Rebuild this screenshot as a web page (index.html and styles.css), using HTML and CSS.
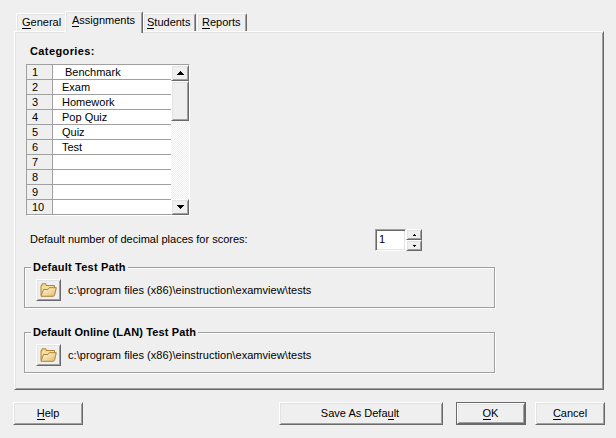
FILE: index.html
```html
<!DOCTYPE html>
<html lang="en">
<head>
<meta charset="utf-8">
<title>Preferences</title>
<link rel="stylesheet" href="styles.css">
</head>
<body>
<svg class="defs" width="0" height="0">
  <defs>
    <linearGradient id="gold" x1="0" y1="0" x2="1" y2="1">
      <stop offset="0" stop-color="#fffbe0"/><stop offset="1" stop-color="#e3bb66"/>
    </linearGradient>
    <symbol id="folder" viewBox="0 0 17 14">
      <path d="M1 12.5V2.5H2V.8H6V2.5H14.5V5" fill="#f3dc9c" stroke="#b08335"/>
      <path d="M1 13.3L3.5 6.5H8L9.3 4.7H16.3L14.6 12L13.5 13.3Z" fill="url(#gold)" stroke="#b08335"/>
    </symbol>
  </defs>
</svg>
<nav class="tabs">
  <div class="tab general"><span><u>G</u>eneral</span></div>
  <div class="tab active"><span><u>A</u>ssignments</span></div>
  <div class="tab students"><span><u>S</u>tudents</span></div>
  <div class="tab reports"><span><u>R</u>eports</span></div>
</nav>
<main class="panel">
  <h2 class="title">Categories:</h2>
  <div class="list">
    <div class="rows">
      <div class="row"><b>1</b><span class="first">Benchmark</span></div>
      <div class="row"><b>2</b><span>Exam</span></div>
      <div class="row"><b>3</b><span>Homework</span></div>
      <div class="row"><b>4</b><span>Pop Quiz</span></div>
      <div class="row"><b>5</b><span>Quiz</span></div>
      <div class="row"><b>6</b><span>Test</span></div>
      <div class="row"><b>7</b><span></span></div>
      <div class="row"><b>8</b><span></span></div>
      <div class="row"><b>9</b><span></span></div>
      <div class="row"><b>10</b><span></span></div>
    </div>
    <div class="scroll">
      <div class="bevel arrow"><svg width="7" height="4" shape-rendering="crispEdges"><path d="M3 0H4V1H5V2H6V3H7V4H0V3H1V2H2V1H3Z"/></svg></div>
      <div class="bevel thumb"></div>
      <div class="track"></div>
      <div class="bevel arrow"><svg width="7" height="4" shape-rendering="crispEdges"><path d="M0 0H7V1H6V2H5V3H4V4H3V3H2V2H1V1H0Z"/></svg></div>
    </div>
  </div>
  <div class="decimals">
    <span class="label">Default number of decimal places for scores:</span>
    <div class="field">1</div>
    <div class="spin">
      <div class="bevel"><svg width="3" height="2" shape-rendering="crispEdges"><path d="M1 0H2V1H3V2H0V1H1Z"/></svg></div>
      <div class="bevel"><svg width="3" height="2" shape-rendering="crispEdges"><path d="M0 0H3V1H2V2H1V1H0Z"/></svg></div>
    </div>
  </div>
  <fieldset class="group">
    <legend><span class="l1">Default Test Path</span></legend>
    <div class="path"><div class="bevel browse"><svg width="17" height="14"><use href="#folder"/></svg></div><span>c:\program files (x86)\einstruction\examview\tests</span></div>
  </fieldset>
  <fieldset class="group">
    <legend><span class="l2">Default Online (LAN) Test Path</span></legend>
    <div class="path"><div class="bevel browse"><svg width="17" height="14"><use href="#folder"/></svg></div><span>c:\program files (x86)\einstruction\examview\tests</span></div>
  </fieldset>
</main>
<footer class="buttons">
  <div class="bevel btn help"><span><u>H</u>elp</span></div>
  <div class="bevel btn save"><span>Save As Defa<u>u</u>lt</span></div>
  <div class="default"><div class="bevel btn"><span><u>O</u>K</span></div></div>
  <div class="bevel btn cancel"><span><u>C</u>ancel</span></div>
</footer>
</body>
</html>
```
FILE: styles.css
```css
* { box-sizing: border-box; }
body {
  margin: 0;
  width: 616px;
  height: 438px;
  overflow: hidden;
  background: #efefef;
  color: #000;
  font: 11px/15px "Liberation Sans", Arial, sans-serif;
}
svg { display: block; }
.defs { position: absolute; }
u { text-decoration: none; border-bottom: 1px solid #000; display: inline-block; line-height: 11px; }
.bevel {
  background: #efefef;
  border: 1px solid;
  border-color: #fff #696969 #696969 #fff;
  box-shadow: inset 1px 1px #e3e3e3, inset -1px -1px #a0a0a0;
  display: flex;
  align-items: center;
  justify-content: center;
}

.tabs { display: flex; align-items: flex-end; height: 31px; padding-left: 16px; }
.tab {
  height: 18px;
  border: 1px solid;
  border-color: #fff #696969 transparent #fff;
  border-bottom: 0;
  border-radius: 2px 2px 0 0;
  box-shadow: inset 1px 1px #e3e3e3, inset -1px 0 #a0a0a0;
  padding: 1px 0 0 5px;
  white-space: nowrap;
}
.general { width: 49px; border-right: 0; box-shadow: inset 1px 1px #e3e3e3; }
.active {
  width: 78px;
  height: 22px;
  margin-bottom: -2px;
  position: relative;
  background: #efefef;
  padding: 1px 0 0 6px;
}
.students { width: 53px; padding-left: 3px; }
.reports { width: 50px; margin-left: 1px; padding-left: 4px; }

.panel {
  margin-left: 14px;
  width: 590px;
  height: 359px;
  border: 1px solid;
  border-color: #fff #696969 #696969 #fff;
  box-shadow: inset 1px 1px #e3e3e3, inset -1px -1px #a0a0a0;
  padding: 12px 0 0 9px;
}
.title { margin: 0 0 5px 6px; font-size: 11px; line-height: 15px; letter-spacing: .4px; }
.list {
  display: flex;
  margin-left: 2px;
  width: 164px;
  height: 152px;
  border: 1px solid;
  border-color: #a0a0a0 #fff #fff #a0a0a0;
}
.rows { width: 144px; background: #fff; }
.row { display: flex; height: 15px; border-bottom: 1px solid #a0a0a0; line-height: 15px; }
.row b { width: 26px; padding-left: 5px; font-weight: 400; background: #efefef; border-right: 1px solid #a0a0a0; }
.row span { padding-left: 9px; }
.row .first { padding-left: 12px; }
.scroll { width: 18px; display: flex; flex-direction: column; }
.arrow { height: 16px; }
.thumb { height: 40px; }
.track { flex: 1; background: repeating-conic-gradient(#efefef 0 25%, #fff 0 50%) 0 0 / 2px 2px; }

.decimals { display: flex; height: 22px; margin: 13px 0 16px 6px; line-height: 20px; }
.label { width: 345px; }
.field {
  width: 31px;
  height: 22px;
  padding-left: 3px;
  line-height: 18px;
  background: #fff;
  border: 1px solid;
  border-color: #a0a0a0 #fff #fff #a0a0a0;
  box-shadow: inset 1px 1px #696969, inset -1px -1px #e3e3e3;
}
.spin { width: 16px; }
.spin .bevel { height: 11px; }

.group {
  display: flex;
  margin: 0 0 24px;
  padding: 11px 0 0 11px;
  width: 471px;
  height: 41px;
  border: 1px solid #a0a0a0;
  box-shadow: inset 1px 1px #fff, 1px 1px #fff;
  position: relative;
}
.group legend {
  position: absolute;
  left: 6px;
  top: -8px;
  padding: 0 2px;
  background: #efefef;
  font-weight: 700;
  white-space: nowrap;
}
.l1 { letter-spacing: .22px; }
.l2 { letter-spacing: .13px; }
.path { display: flex; line-height: 23px; letter-spacing: .05px; }
.browse { width: 25px; height: 22px; margin-right: 7px; }

.buttons { display: flex; margin: 12px 0 0 13px; }
.btn { width: 70px; height: 23px; }
.save { width: 164px; margin: 0 13px 0 196px; padding-right: 2px; }
.default { width: 70px; height: 23px; margin-right: 9px; border: 1px solid #696969; }
.default .btn { width: 68px; height: 21px; padding-right: 1px; }
```
